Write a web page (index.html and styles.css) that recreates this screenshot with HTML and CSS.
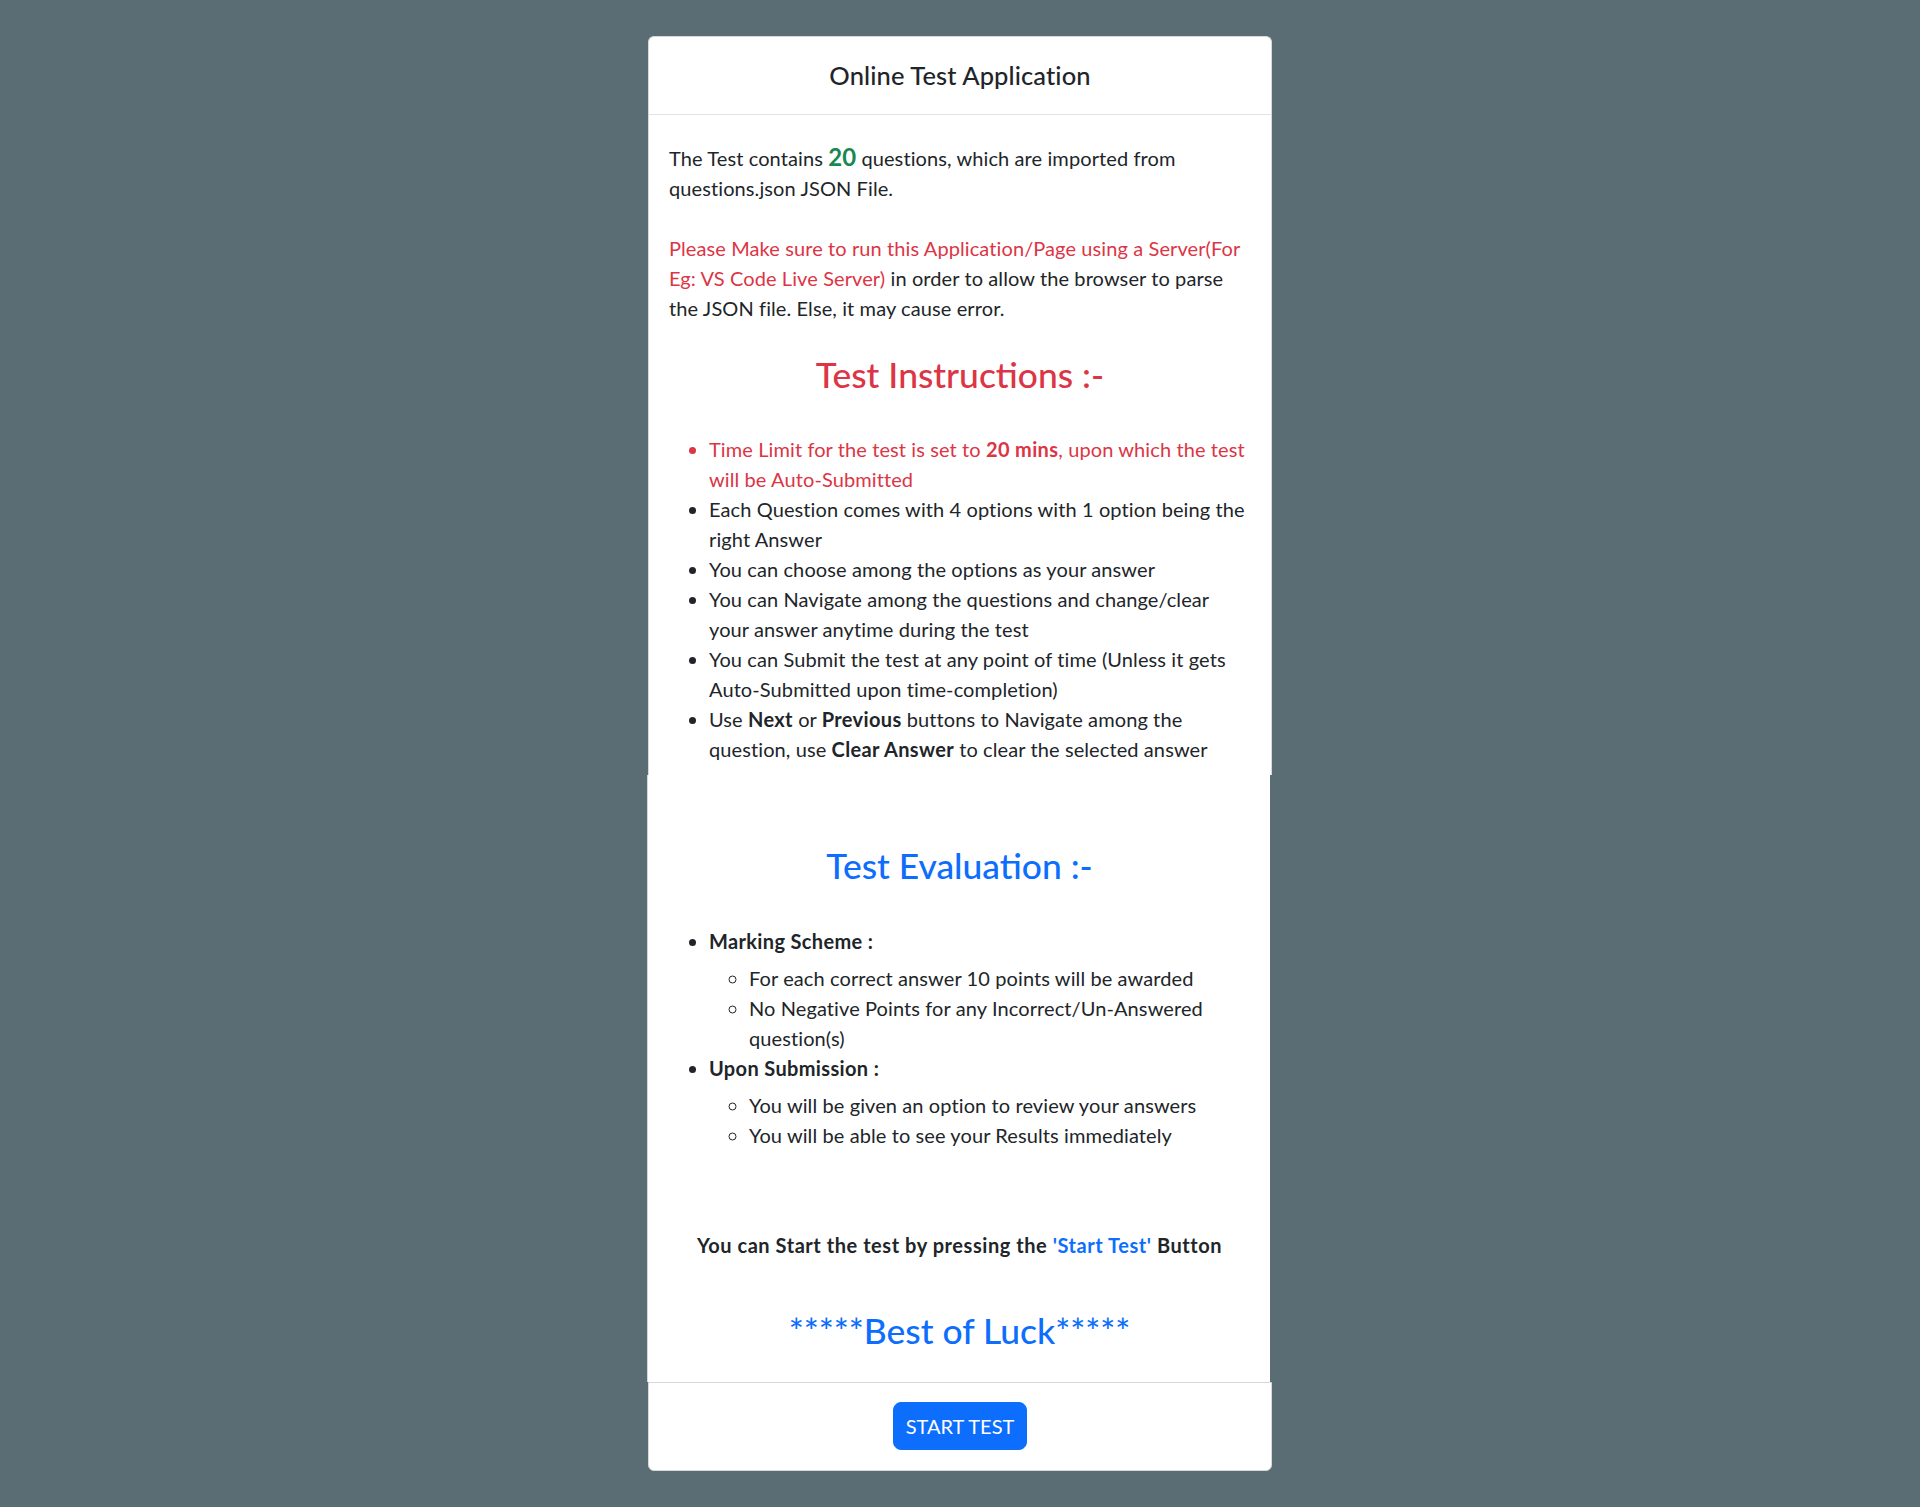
FILE: index.html
```html
<!DOCTYPE html>
<html lang="en">
<head>
<meta charset="utf-8">
<title>Online Test Application</title>
<link rel="stylesheet" href="styles.css">
</head>
<body>
<main class="page">
  <div class="card">
    <div class="card-top">
      <header class="card-header">
        <h3 class="title">Online Test Application</h3>
      </header>
      <section class="card-body">
        <p class="lead">The Test contains <span class="count">20</span> questions, which are imported from questions.json JSON File.</p>
        <p class="lead"><span class="danger">Please Make sure to run this Application/Page using a Server(For Eg: VS Code Live Server)</span> in order to allow the browser to parse the JSON file. Else, it may cause error.</p>
        <h2 class="section-title danger">Test Instructions :-</h2>
        <ul class="list">
          <li class="danger">Time Limit for the test is set to <b>20 mins</b>, upon which the test will be Auto-Submitted</li>
          <li>Each Question comes with 4 options with 1 option being the right Answer</li>
          <li>You can choose among the options as your answer</li>
          <li>You can Navigate among the questions and change/clear your answer anytime during the test</li>
          <li>You can Submit the test at any point of time (Unless it gets Auto-Submitted upon time-completion)</li>
          <li>Use <b>Next</b> or <b>Previous</b> buttons to Navigate among the question, use <b>Clear Answer</b> to clear the selected answer</li>
        </ul>
      </section>
    </div>
    <section class="card-mid">
      <h2 class="section-title primary eval-title">Test Evaluation :-</h2>
      <ul class="list">
        <li><b>Marking Scheme :</b>
          <ul class="sublist">
            <li>For each correct answer 10 points will be awarded</li>
            <li>No Negative Points for any Incorrect/Un-Answered question(s)</li>
          </ul>
        </li>
        <li><b>Upon Submission :</b>
          <ul class="sublist">
            <li>You will be given an option to review your answers</li>
            <li>You will be able to see your Results immediately</li>
          </ul>
        </li>
      </ul>
      <p class="start-note">You can Start the test by pressing the <span class="primary">'Start Test'</span> Button</p>
      <h2 class="section-title primary luck">*****Best of Luck*****</h2>
    </section>
    <footer class="card-footer">
      <button class="btn" type="button">START TEST</button>
    </footer>
  </div>
</main>
</body>
</html>
```

FILE: styles.css
```css
* { box-sizing: border-box; }

html, body {
  margin: 0;
  padding: 0;
}

body {
  background: #5a6c74;
  font-family: Lato, "Open Sans", sans-serif;
  color: #212529;
  font-size: 20px;
  line-height: 30px;
  letter-spacing: 0.1px;
  min-height: 1507px;
}

.page {
  display: flex;
  justify-content: center;
  padding-top: 36px;
}

.card {
  width: 624px;
  display: flex;
  flex-direction: column;
}

.card-top {
  background: #fff;
  border: 1px solid #d6d7d8;
  border-bottom: 0;
  border-radius: 6px 6px 0 0;
}

.card-header {
  border-bottom: 1px solid #e1e3e5;
  padding: 24px 16px;
  text-align: center;
}

.title {
  margin: 0;
  font-size: 25.5px;
  line-height: 29px;
  font-weight: 500;
  letter-spacing: 0.1px;
}

.card-body {
  padding: 28px 20px 11px;
}

.lead {
  margin: 0 0 30px;
}

.count {
  color: #198754;
  font-weight: 700;
  font-size: 24px;
  line-height: 1;
}

.danger { color: #dc3545; }
.primary { color: #0d6efd; }

.section-title {
  margin: 0;
  text-align: center;
  font-size: 35.4px;
  line-height: 43px;
  font-weight: 500;
  letter-spacing: 0;
}

.card-body .section-title {
  margin-top: 1px;
  margin-bottom: 38px;
}

.list {
  margin: 0;
  padding-left: 40px;
}

.list b {
  font-weight: 700;
  letter-spacing: 0.35px;
}

.sublist {
  list-style: circle;
  margin: 7px 0 0;
  padding-left: 40px;
}

.card-mid {
  background: #fff;
  margin: 0 2px 0 -1px;
  border-left: 1px solid #d6d7d8;
  padding: 69px 20px 30px 21px;
}

.eval-title {
  margin-bottom: 39px;
}

.start-note {
  margin: 80px 0 49px;
  text-align: center;
  font-weight: 700;
  letter-spacing: 0.55px;
}

.card-footer {
  background: #fff;
  border: 1px solid #d6d7d8;
  border-radius: 0 0 6px 6px;
  padding: 19px 16px 20px;
  display: flex;
  justify-content: center;
}

.btn {
  font-family: inherit;
  font-size: 20px;
  line-height: 30px;
  letter-spacing: 0;
  white-space: nowrap;
  color: #fff;
  background: #0d6efd;
  border: 1px solid #0d6efd;
  border-radius: 8px;
  padding: 8px 0;
  width: 134px;
  text-align: center;
  cursor: pointer;
}
```
